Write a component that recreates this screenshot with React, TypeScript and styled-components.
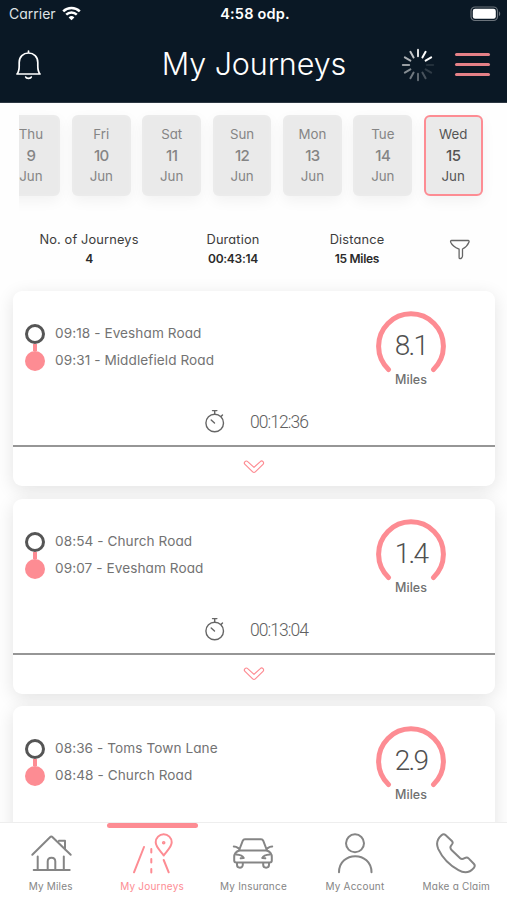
import React from "react";
import styled, { createGlobalStyle } from "styled-components";

type Journey = {
  start: string;
  end: string;
  miles: string;
  duration: string;
};

const days = [
  { name: "Thu", date: 9 },
  { name: "Fri", date: 10 },
  { name: "Sat", date: 11 },
  { name: "Sun", date: 12 },
  { name: "Mon", date: 13 },
  { name: "Tue", date: 14 },
  { name: "Wed", date: 15 },
];

const journeys: Journey[] = [
  { start: "09:18 - Evesham Road", end: "09:31 - Middlefield Road", miles: "8.1", duration: "00:12:36" },
  { start: "08:54 - Church Road", end: "09:07 - Evesham Road", miles: "1.4", duration: "00:13:04" },
  { start: "08:36 - Toms Town Lane", end: "08:48 - Church Road", miles: "2.9", duration: "00:12:09" },
];

const BellIcon = () => (
  <svg width="27" height="32" viewBox="0 0 27 32" fill="none" stroke="#fff" strokeWidth="1.7" strokeLinecap="round" strokeLinejoin="round">
    <path d="M13.500 2v2M2 25h23c-1.800-2-2.200-4-2.200-8v-3.500c0-5.800-4-9.500-9.300-9.500s-9.300 3.700-9.300 9.500V17c0 4-.4 6-2.200 8z" />
    <path d="M10.700 28c.5 1.900 5.100 1.900 5.600 0" />
  </svg>
);

const WifiIcon = () => (
  <svg width="19" height="15" viewBox="0 0 19 15" fill="none" stroke="#fff" strokeWidth="2.500">
    <path d="M1.200 5.400a12 12 0 0 1 16.600 0M4.200 8.700a7.600 7.600 0 0 1 10.600 0" />
    <path d="M9.500 14.300l-2.900-2.900a4.200 4.200 0 0 1 5.800 0z" fill="#fff" stroke="none" />
  </svg>
);

const BatteryIcon = () => (
  <svg width="31" height="16" viewBox="0 0 31 16">
    <rect x="1" y="1" width="26.500" height="13.500" rx="4" fill="none" stroke="#6b737b" strokeWidth="1.200" />
    <rect x="2.800" y="2.800" width="23" height="10" rx="2.300" fill="#fff" />
    <path d="M29 5.500c1.600.6 1.600 4 0 4.600z" fill="#6b737b" />
  </svg>
);

const spokes = [0.85, 1, 1, 0.1, 0.15, 0.25, 0.35, 0.42, 0.5, 0.58, 0.66, 0.75];

const Spinner = () => (
  <svg width="34" height="34" viewBox="-17 -17 34 34" stroke="#fff" strokeWidth="2" strokeLinecap="round">
    {spokes.map((opacity, i) => (
      <path key={i} d="M0-8.800v-6.400" opacity={opacity} transform={`rotate(${i * 30})`} />
    ))}
  </svg>
);

const FilterIcon = () => (
  <svg width="22" height="22" viewBox="0 0 22 22" fill="none" stroke="#666" strokeWidth="1.300" strokeLinejoin="round">
    <path d="M2.500 1.500h16.600c.9 0 1.200.9.8 1.700-1.300 3.300-3.900 5.500-6.400 6.800v7c0 1.100-1.200 2.700-2.400 2.700-.8 0-1-.5-1-1.300V10.200C7 8.800 3.100 6.500 1.700 3.200c-.3-.8 0-1.700.8-1.700z" />
  </svg>
);

const StopwatchIcon = () => (
  <svg width="22" height="24" viewBox="0 0 22 24" fill="none" stroke="#666" strokeWidth="1.400" strokeLinecap="round">
    <circle cx="10.700" cy="14" r="8.800" />
    <path d="M8.500 1.600h4.400M10.700 1.800v3.500M17 7.600l1.500-1.600M10.500 14L7.200 10.900" />
  </svg>
);

const ChevronIcon = () => (
  <svg width="22" height="14" viewBox="0 0 22 14" fill="none" stroke="#fd8c93" strokeWidth="1.200" strokeLinejoin="round">
    <path d="M2 1.600c.8-.8 1.900-.8 2.700 0L11 7.400l6.300-5.800c.8-.8 1.900-.8 2.700 0s.8 2 0 2.800l-7.700 7.500c-.8.8-1.800.8-2.600 0L2 4.400c-.8-.8-.8-2 0-2.800z" />
  </svg>
);

const HouseIcon = () => (
  <NavSvg viewBox="0 0 44 44">
    <path d="M3.300 22.700L21 5.200c.8-.8 1.800-.8 2.600 0l18.100 17.500M30 8.800h6v8.700M8.700 24.500V38M34.800 24.500V38M4.700 38h36" />
    <path d="M18.700 38v-8.500c0-5 7.600-5 7.600 0V38" />
  </NavSvg>
);

const RoadIcon = () => (
  <NavSvg viewBox="0 0 44 44">
    <path d="M14 15L4 40.300M21.300 17v3.400M21.300 27v3.400M21.300 37v3.400M33.700 28l5 12.300" />
    <path d="M33.700 23.500c-2-3.500-8-8-8-13.200a8 8 0 0 1 16 0c0 5.200-6 9.700-8 13.200z" />
    <circle cx="33.700" cy="10.700" r=".8" />
  </NavSvg>
);

const CarIcon = () => (
  <NavSvg viewBox="0 0 44 44">
    <path d="M8 18.500l3.700-9.700c.4-1 1.200-1.600 2.300-1.600h16c1.100 0 1.900.6 2.300 1.600l3.700 9.700M8 18.500h28M2.800 14.500c2 0 3 .5 4.500 1.600M41.200 14.500c-2 0-3 .5-4.500 1.600" />
    <path d="M8 18.500c-3.500 1.500-4.800 3.500-4.800 6.500v3.500c0 1.300.7 2 2 2h33.600c1.300 0 2-.7 2-2V25c0-3-1.300-5-4.800-6.500" />
    <path d="M5.200 22.500c4 .2 6.500 1.200 7.500 3.500l-3 .3M38.800 22.500c-4 .2-6.500 1.200-7.500 3.500l3 .3" />
    <path d="M6 31v1.800c0 3.800 5.800 3.800 5.800 0V31M32.200 31v1.800c0 3.800 5.800 3.800 5.800 0V31" />
  </NavSvg>
);

const PersonIcon = () => (
  <NavSvg viewBox="0 0 44 44">
    <circle cx="22" cy="11.300" r="9" />
    <path d="M6 40.300c0-21.500 32.500-21.500 32.500 0" />
  </NavSvg>
);

const PhoneIcon = () => (
  <NavSvg viewBox="0 0 44 44">
    <path d="M11.500 3l6.400 6c1 1 1 2 .3 3-2 2.600-2.600 3.800-.4 6.300l8.400 8c1.500 1.300 2.800.8 4.400-.1 1.800-1 2.800-1 4 .2l5.200 5.400c1.200 1.300 1.200 2.700.1 4-4.600 5.400-9.500 5.800-15.400 2.300C15 32.800 8 25 4.200 16.800 1.900 11.500 3.200 7 7.500 3.200c1.400-1.200 2.700-1.400 4-.2z" />
  </NavSvg>
);

const tabs = [
  { label: "My Miles", Icon: HouseIcon },
  { label: "My Journeys", Icon: RoadIcon, active: true },
  { label: "My Insurance", Icon: CarIcon },
  { label: "My Account", Icon: PersonIcon },
  { label: "Make a Claim", Icon: PhoneIcon },
];

const JourneyCard = ({ start, end, miles, duration }: Journey) => (
  <Card>
    <Summary>
      <Track>
        <StartDot />
        <Link />
        <EndDot />
      </Track>
      <Stops>
        <Stop>{start}</Stop>
        <Stop>{end}</Stop>
      </Stops>
      <Gauge>
        <GaugeArc viewBox="0 0 70 70">
          <path d="M12.500 58.500a32.400 32.400 0 1 1 45 0" />
        </GaugeArc>
        <Miles>{miles}</Miles>
        <Unit>Miles</Unit>
      </Gauge>
    </Summary>
    <DurationRow>
      <StopwatchIcon />
      <Duration>{duration}</Duration>
    </DurationRow>
    <Expand>
      <ChevronIcon />
    </Expand>
  </Card>
);

export default function App() {
  return <>
    <GlobalStyle />
    <Screen>
      <Header>
        <StatusBar>
          <Carrier>Carrier <WifiIcon /></Carrier>
          <Clock>4:58 odp.</Clock>
          <Battery><BatteryIcon /></Battery>
        </StatusBar>
        <TitleBar>
          <BellIcon />
          <Title>My Journeys</Title>
          <Actions>
            <Spinner />
            <Menu><i /><i /><i /></Menu>
          </Actions>
        </TitleBar>
      </Header>
      <Days>
        {days.map(({ name, date }) => (
          <Day key={date} $active={date === 15}>
            <span>{name}</span>
            <b>{date}</b>
            <span>Jun</span>
          </Day>
        ))}
      </Days>
      <Stats>
        <Stat>No. of Journeys<strong>4</strong></Stat>
        <Stat>Duration<strong>00:43:14</strong></Stat>
        <Stat>Distance<strong>15 Miles</strong></Stat>
        <FilterIcon />
      </Stats>
      <List>
        {journeys.map((journey) => <JourneyCard key={journey.start} {...journey} />)}
      </List>
      <Nav>
        {tabs.map(({ label, Icon, active }) => (
          <Tab key={label} $active={active}>
            <Icon />
            {label}
          </Tab>
        ))}
      </Nav>
    </Screen>
  </>
}

const GlobalStyle = createGlobalStyle`
  * {
    box-sizing: border-box;
  }

  body {
    margin: 0;
    background: #fff;
    font-family: Inter, "Liberation Sans", sans-serif;
    font-feature-settings: "cv11";
  }

  svg {
    display: block;
    flex-shrink: 0;
  }
`;

const Screen = styled.div`
  width: 507px;
  height: 900px;
  display: flex;
  flex-direction: column;
  overflow: hidden;
  background: #fefefe;
`;

const Header = styled.header`
  height: 103px;
  flex-shrink: 0;
  background: #0a1825;
  border-bottom: 1px solid #2c3742;
  color: #fff;
`;

const StatusBar = styled.div`
  height: 27px;
  padding: 0 6px 0 9px;
  display: grid;
  grid-template-columns: 1fr auto 1fr;
  align-items: center;
  font-size: 14px;
`;

const Carrier = styled.div`
  display: flex;
  align-items: center;
  gap: 6px;
  color: #dfe2e5;
`;

const Clock = styled.div`
  font-weight: 600;
  font-size: 14.500px;
  letter-spacing: 0.200px;
`;

const Battery = styled.div`
  justify-self: end;
`;

const TitleBar = styled.div`
  height: 75px;
  padding: 0 17px 0 15px;
  display: grid;
  grid-template-columns: 1fr auto 1fr;
  align-items: center;
`;

const Title = styled.h1`
  margin: 0 0 3px 3px;
  font-weight: 300;
  font-size: 30.500px;
  letter-spacing: -0.100px;
`;

const Actions = styled.div`
  display: flex;
  align-items: center;
  justify-content: flex-end;
  gap: 20px;
`;

const Menu = styled.div`
  width: 35px;
  display: grid;
  gap: 7px;

  i {
    height: 2.700px;
    border-radius: 2px;
    background: #e58188;
  }
`;

const Days = styled.div`
  height: 112px;
  flex-shrink: 0;
  margin-left: 19px;
  padding: 12px 24.500px 0 0;
  display: flex;
  justify-content: flex-end;
  gap: 11.700px;
  overflow: hidden;
`;

const Day = styled.div<{ $active?: boolean }>`
  width: 58.700px;
  height: 81px;
  flex-shrink: 0;
  display: flex;
  flex-direction: column;
  align-items: center;
  justify-content: center;
  border: 2px solid ${({ $active }) => ($active ? "#fd8c93" : "#ebebeb")};
  border-radius: 6px;
  background: #eaeaea;
  box-shadow: 0 5px 14px rgba(0, 0, 0, 0.05);
  color: ${({ $active }) => ($active ? "#555" : "#858585")};
  font-size: 13.300px;
  line-height: 21px;

  b {
    font-size: 15px;
    font-weight: 500;
    letter-spacing: -0.600px;
  }
`;

const Stats = styled.div`
  height: 76px;
  flex-shrink: 0;
  padding: 15px 36px 0 17px;
  display: grid;
  grid-template-columns: 144px 144px 104px 1fr;
  align-items: start;

  > svg {
    justify-self: end;
    margin-top: 9px;
  }
`;

const Stat = styled.div`
  display: flex;
  flex-direction: column;
  align-items: center;
  color: #3c3c3c;
  font-size: 12.800px;
  line-height: 19px;
  letter-spacing: 0.150px;

  strong {
    color: #2a2a2a;
    font-size: 12px;
    font-weight: 600;
    letter-spacing: -0.300px;
  }
`;

const List = styled.main`
  flex: 1;
  min-height: 0;
  padding: 0.400px 12px 0 13px;
  display: flex;
  flex-direction: column;
  gap: 12.300px;
`;

const Card = styled.section`
  height: 195px;
  flex-shrink: 0;
  border-radius: 9px;
  background: #fff;
  box-shadow: 0 4px 18px rgba(0, 0, 0, 0.11);
`;

const Summary = styled.div`
  height: 117px;
  padding: 20px 49px 0 12px;
  display: flex;
`;

const Track = styled.div`
  width: 20px;
  padding-top: 13px;
  display: flex;
  flex-direction: column;
  align-items: center;
`;

const StartDot = styled.div`
  width: 20px;
  height: 20px;
  border: 3px solid #555;
  border-radius: 50%;
`;

const Link = styled.div`
  width: 4px;
  height: 7px;
  background: #fd8c93;
`;

const EndDot = styled.div`
  width: 20px;
  height: 20px;
  border-radius: 50%;
  background: #fd8c93;
`;

const Stops = styled.div`
  flex: 1;
  padding: 9px 0 0 10px;
`;

const Stop = styled.div`
  color: #737373;
  font-size: 13.600px;
  line-height: 27px;
  letter-spacing: 0.080px;
`;

const Gauge = styled.div`
  width: 70px;
  height: 78px;
  display: grid;
  grid-template-rows: 62px 16px;
  justify-items: center;
`;

const GaugeArc = styled.svg`
  width: 70px;
  height: 70px;
  grid-area: 1 / 1;
  fill: none;
  stroke: #fd8c93;
  stroke-width: 5px;
  stroke-linecap: round;
`;

const Miles = styled.div`
  grid-area: 1 / 1;
  color: #505050;
  font-family: Roboto, "Liberation Sans", sans-serif;
  font-weight: 300;
  font-size: 28px;
  line-height: 70px;
  letter-spacing: -1.700px;
`;

const Unit = styled.div`
  color: #707070;
  font-size: 12.500px;
  font-weight: 500;
  line-height: 14px;
`;

const DurationRow = styled.div`
  height: 39px;
  padding: 0 0 11px 191px;
  display: flex;
  align-items: center;
  gap: 24px;
  border-bottom: 2px solid #969696;
`;

const Duration = styled.div`
  padding-top: 2px;
  color: #606060;
  font-family: Roboto, "Liberation Sans", sans-serif;
  font-weight: 300;
  font-size: 17.500px;
  letter-spacing: -0.950px;
`;

const Expand = styled.div`
  height: 39px;
  display: flex;
  align-items: center;
  justify-content: center;
`;

const Nav = styled.nav`
  height: 78px;
  flex-shrink: 0;
  display: grid;
  grid-template-columns: repeat(5, 1fr);
  border-top: 1px solid #eee;
  background: #fff;
  z-index: 1;
`;

const NavSvg = styled.svg`
  width: 44px;
  height: 44px;
  fill: none;
  stroke: currentColor;
  stroke-width: 2px;
  stroke-linecap: round;
  stroke-linejoin: round;
`;

const Tab = styled.div<{ $active?: boolean }>`
  display: flex;
  flex-direction: column;
  align-items: center;
  gap: 4px;
  color: ${({ $active }) => ($active ? "#fd8c93" : "#858585")};
  font-size: 10px;
  line-height: 12px;
  letter-spacing: 0.200px;

  &::before {
    content: "";
    width: 91px;
    height: 5px;
    border-radius: 3px;
    background: ${({ $active }) => ($active ? "#fd8c93" : "transparent")};
  }
`;
